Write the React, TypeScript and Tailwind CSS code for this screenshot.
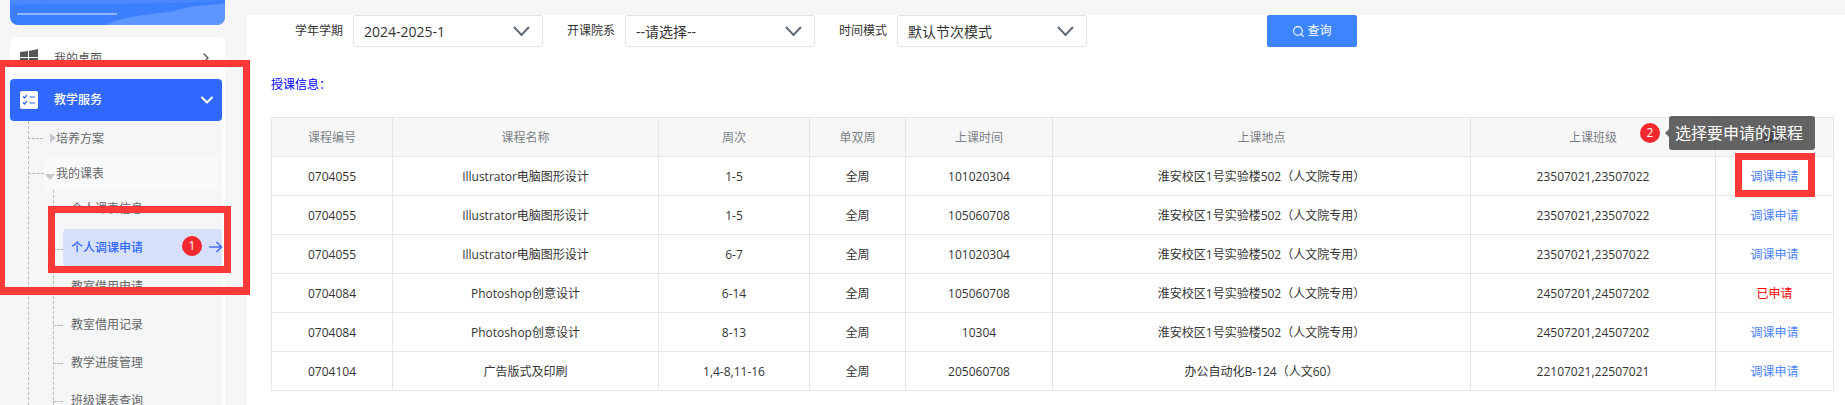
import { ChevronDown, ChevronRight, Search } from "lucide-react";

const font = "font-['Open_Sans','Noto_Sans_CJK_SC',sans-serif]";

const rows = [
  ["0704055", "Illustrator电脑图形设计", "1-5", "全周", "101020304", "淮安校区1号实验楼502（人文院专用）", "23507021,23507022", "调课申请"],
  ["0704055", "Illustrator电脑图形设计", "1-5", "全周", "105060708", "淮安校区1号实验楼502（人文院专用）", "23507021,23507022", "调课申请"],
  ["0704055", "Illustrator电脑图形设计", "6-7", "全周", "101020304", "淮安校区1号实验楼502（人文院专用）", "23507021,23507022", "调课申请"],
  ["0704084", "Photoshop创意设计", "6-14", "全周", "105060708", "淮安校区1号实验楼502（人文院专用）", "24507201,24507202", "已申请"],
  ["0704084", "Photoshop创意设计", "8-13", "全周", "10304", "淮安校区1号实验楼502（人文院专用）", "24507201,24507202", "调课申请"],
  ["0704104", "广告版式及印刷", "1,4-8,11-16", "全周", "205060708", "办公自动化B-124（人文60）", "22107021,22507021", "调课申请"],
];

const headers = ["课程编号", "课程名称", "周次", "单双周", "上课时间", "上课地点", "上课班级", "操作"];

function Filter({ label, value }: { label: string; value: string }) {
  return (
    <div className="flex items-center">
      <div className="w-[82px] text-right text-xs text-[#333] pr-[10px]">{label}</div>
      <div className="w-[190px] h-8 flex items-center justify-between bg-white border border-[#e6e6e6] rounded-[2px] pl-[10px] pr-3 text-sm text-[#333]">
        <span className="pt-[1px]">{value}</span>
        <svg width="17" height="10" viewBox="0 0 17 10" fill="none" stroke="#5f6b78" strokeWidth="2">
          <path d="M1 1 L8.5 9 L16 1" />
        </svg>
      </div>
    </div>
  );
}

function TreeItem({ text }: { text: string }) {
  return (
    <div className="h-[38px] relative flex items-center pl-[18px] text-xs text-[#666]">
      <div className="absolute left-0 top-[19px] w-[10px] border-t border-dashed border-[#bbb]" />
      {text}
    </div>
  );
}

export default function App() {
  return (
    <div className={`${font} relative w-[1845px] h-[405px] overflow-hidden bg-[#f5f6f8] flex`}>
      {/* left menu */}
      <div className="w-[235px] shrink-0 pl-[10px] pr-[10px] h-[405px] border-r border-[#f0f1f3]">
        <div className="relative h-[25px] w-[215px] rounded-b-[8px] bg-[#3b7fff] overflow-hidden">
          <svg className="absolute inset-0" width="215" height="25" viewBox="0 0 215 25">
            <path d="M95 25 C125 12 150 16 175 8 C190 4 205 6 215 3 V25 Z" fill="#6a9dff" opacity="0.75" />
            <path d="M0 5 C60 2 150 6 215 0 V0 H0 Z" fill="#4a88ff" />
          </svg>
          <div className="absolute left-[7px] top-[13px] w-[100px] h-[2px] bg-[#8db4ff]" />
        </div>
        <div className="mt-3 bg-white rounded-t-[6px] w-[215px] h-[368px]">
          <div className="h-[42px] flex items-center pl-[10px] text-xs text-[#555]">
            <svg width="18" height="18" viewBox="0 0 18 18" className="mr-[16px]">
              <path d="M0 3 L8 2 V8 H0 Z M9 2 L18 0 V8 H9 Z M0 9 H8 V16 L0 15 Z M9 9 H18 V18 L9 16 Z" fill="#555" />
            </svg>
            <span className="flex-1 pt-[1px]">我的桌面</span>
            <ChevronRight className="w-4 h-4 mr-[11px] text-[#555]" />
          </div>
          <div className="w-[212px] h-[42px] bg-[#3068ff] rounded-[4px] flex items-center pl-[10px] text-xs font-medium text-white">
            <div className="w-[18px] h-[18px] bg-white rounded-[2px] mr-[16px] flex items-center justify-center">
              <svg width="14" height="14" viewBox="0 0 14 14" fill="none" stroke="#3068ff" strokeWidth="1.2">
                <path d="M1 3.5 L2.5 5 L5 2 M1 9.5 L2.5 11 L5 8 M7.5 4 H13 M7.5 10 H13" />
              </svg>
            </div>
            <span className="flex-1">教学服务</span>
            <ChevronDown className="w-5 h-5 mr-[5px]" strokeWidth={2.5} />
          </div>
          <div className="bg-[#f5f6f8] w-[212px] h-[284px] pl-[18px] relative">
            <div className="absolute left-[18px] top-0 h-full border-l border-dashed border-[#bbb]" />
            <div className="h-[36px] relative flex items-center pl-[28px] text-xs text-[#666]">
              <div className="absolute left-0 top-[17px] w-[15px] border-t border-dashed border-[#bbb]" />
              <div className="absolute left-[22px] top-[12px] border-y-[5px] border-l-[6px] border-y-transparent border-l-[#c8c9ce]" />
              培养方案
            </div>
            <div className="h-[33px] w-[176px] relative flex items-center ml-[16px] pl-[12px] pt-[1px] text-xs text-[#666] bg-[#f8f9fa] rounded">
              <div className="absolute left-[-16px] top-[16px] w-[16px] border-t border-dashed border-[#bbb]" />
              <div className="absolute left-[1px] top-[17px] border-x-[5px] border-t-[6px] border-x-transparent border-t-[#c8c9ce]" />
              我的课表
            </div>
            <div className="ml-[25px] relative">
              <div className="absolute left-0 top-0 h-full border-l border-dashed border-[#bbb]" />
              <TreeItem text="个人课表信息" />
              <div className="h-[37px] mt-[1px] mb-[2px] relative flex items-center text-xs">
                <div className="absolute left-0 top-[20px] w-[10px] border-t border-dashed border-[#bbb]" />
                <div className="ml-[10px] w-[159px] h-[37px] bg-[#d6e0fa] rounded-[4px] flex items-center pl-2 font-medium text-[#3068ff]">
                  个人调课申请
                </div>
              </div>
              <TreeItem text="教室借用申请" />
              <TreeItem text="教室借用记录" />
              <TreeItem text="教学进度管理" />
              <TreeItem text="班级课表查询" />
            </div>
          </div>
        </div>
      </div>

      {/* main */}
      <div className="flex-1 pl-[12px] pt-[9px]">
        <div className="bg-white h-[396px] pl-[24px]">
          <div className="flex items-center h-8 mt-[6px]">
            <Filter label="学年学期" value="2024-2025-1" />
            <Filter label="开课院系" value="--请选择--" />
            <Filter label="时间模式" value="默认节次模式" />
            <button className="ml-[180px] w-[90px] h-8 bg-[#3d84ff] rounded-[2px] text-white text-xs flex items-center justify-center gap-[2px]">
              <Search className="w-[13px] h-[13px]" />
              查询
            </button>
          </div>
          <div className="mt-[30px] text-xs leading-4 text-[#0000ff]">授课信息：</div>
          <table className="mt-[24px] table-fixed border-collapse w-[1562px] text-xs text-[#333]">
            <colgroup>
              <col className="w-[121px]" />
              <col className="w-[266px]" />
              <col className="w-[151px]" />
              <col className="w-[96px]" />
              <col className="w-[147px]" />
              <col className="w-[418px]" />
              <col className="w-[245px]" />
              <col className="w-[118px]" />
            </colgroup>
            <thead>
              <tr className="h-[39px] bg-[#f7f7f7] text-[#7a7f87]">
                {headers.map((h) => (
                  <th key={h} className="font-normal pt-[2px] border border-[#e6e6e6]">{h}</th>
                ))}
              </tr>
            </thead>
            <tbody>
              {rows.map((r, i) => (
                <tr key={i} className="h-[39px]">
                  <td className="text-center pt-[2px] border border-[#e6e6e6]">{r[0]}</td>
                  <td className="text-center pt-[2px] border border-[#e6e6e6]">{r[1]}</td>
                  <td className="text-center pt-[2px] border border-[#e6e6e6]">{r[2]}</td>
                  <td className="text-center pt-[2px] border border-[#e6e6e6]">{r[3]}</td>
                  <td className="text-center pt-[2px] border border-[#e6e6e6]">{r[4]}</td>
                  <td className="text-center pt-[2px] border border-[#e6e6e6]">{r[5]}</td>
                  <td className="text-center pt-[2px] border border-[#e6e6e6]">{r[6]}</td>
                  <td className={`text-center pt-[2px] border border-[#e6e6e6] ${r[7] === "已申请" ? "text-[#ff0000]" : "text-[#4d84ff]"}`}>{r[7]}</td>
                </tr>
              ))}
            </tbody>
          </table>
        </div>
      </div>

      {/* annotations drawn on top of the screenshot */}
      <div className="absolute left-0 top-[60px] w-[250px] h-[235px] border-l-[5px] border-r-[7px] border-t-[7px] border-b-[8px] border-[#ff3838]" />
      <div className="absolute left-[48px] top-[206px] w-[183px] h-[67px] border-[7px] border-[#ff3838]" />
      <div className="absolute left-[182px] top-[236px] w-5 h-5 rounded-full bg-[#f5282d] text-white text-xs flex items-center justify-center">1</div>
      <svg className="absolute left-[209px] top-[241px]" width="14" height="12" viewBox="0 0 14 12" fill="none" stroke="#4a72ef" strokeWidth="1.7">
        <path d="M0 6 H12.5 M7.5 1 L12.5 6 L7.5 11" />
      </svg>
      <div className="absolute left-[1640px] top-[123px] w-5 h-5 rounded-full bg-[#f5282d] text-white text-xs flex items-center justify-center">2</div>
      <div className="absolute left-[1669px] top-[116px] w-[146px] h-[34px] bg-[#000000]/60 rounded-[3px] pl-[6px] text-white text-base flex items-center">
        <div className="absolute left-[-4px] top-[13px] border-y-[4px] border-r-[4px] border-y-transparent border-r-[#666]" />
        选择要申请的课程
      </div>
      <div className="absolute left-[1735px] top-[153px] w-[80px] h-[44px] border-[7px] border-[#ff3838]" />
    </div>
  );
}
